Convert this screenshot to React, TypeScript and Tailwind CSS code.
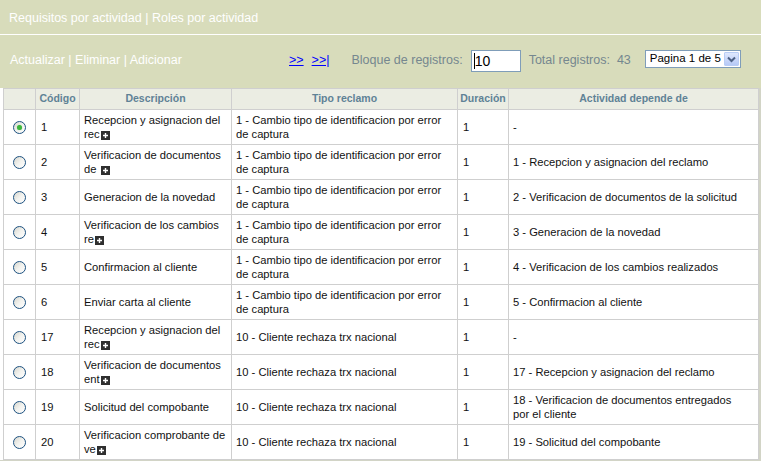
import React from 'react';

type Row = {
  code: number;
  desc: string[];
  more?: boolean;
  tipo: string[];
  dur: number;
  act: string[];
  checked?: boolean;
};

const TIPO_1 = ['1 - Cambio tipo de identificacion por error', 'de captura'];
const TIPO_10 = ['10 - Cliente rechaza trx nacional'];

const rows: Row[] = [
  { code: 1, desc: ['Recepcion y asignacion del', 'rec'], more: true, tipo: TIPO_1, dur: 1, act: ['-'], checked: true },
  { code: 2, desc: ['Verificacion de documentos', 'de '], more: true, tipo: TIPO_1, dur: 1, act: ['1 - Recepcion y asignacion del reclamo'] },
  { code: 3, desc: ['Generacion de la novedad'], tipo: TIPO_1, dur: 1, act: ['2 - Verificacion de documentos de la solicitud'] },
  { code: 4, desc: ['Verificacion de los cambios', 're'], more: true, tipo: TIPO_1, dur: 1, act: ['3 - Generacion de la novedad'] },
  { code: 5, desc: ['Confirmacion al cliente'], tipo: TIPO_1, dur: 1, act: ['4 - Verificacion de los cambios realizados'] },
  { code: 6, desc: ['Enviar carta al cliente'], tipo: TIPO_1, dur: 1, act: ['5 - Confirmacion al cliente'] },
  { code: 17, desc: ['Recepcion y asignacion del', 'rec'], more: true, tipo: TIPO_10, dur: 1, act: ['-'] },
  { code: 18, desc: ['Verificacion de documentos', 'ent'], more: true, tipo: TIPO_10, dur: 1, act: ['17 - Recepcion y asignacion del reclamo'] },
  { code: 19, desc: ['Solicitud del compobante'], tipo: TIPO_10, dur: 1, act: ['18 - Verificacion de documentos entregados', 'por el cliente'] },
  { code: 20, desc: ['Verificacion comprobante de', 've'], more: true, tipo: TIPO_10, dur: 1, act: ['19 - Solicitud del compobante'] },
];

// cuadrito negro con "+" que indica texto truncado
function PlusBox() {
  return (
    <span className="ml-px inline-flex h-[9px] w-[9px] items-center justify-center bg-[#2f2f2f] align-[-1px]">
      <svg width="7" height="7" viewBox="0 0 7 7">
        <path d="M3.5 1v5M1 3.5h5" stroke="#fff" strokeWidth="1.4" />
      </svg>
    </span>
  );
}

function Radio({ checked }: { checked?: boolean }) {
  return (
    <span className="mx-auto flex h-[13px] w-[13px] items-center justify-center rounded-full border border-[#1d5281] bg-gradient-to-br from-[#d6d6ce] via-[#f2f2ee] to-white">
      {checked && <span className="h-[5px] w-[5px] rounded-full bg-[#3cb43c] shadow-[0_0_1px_#7ad97a]" />}
    </span>
  );
}

function Lines({ lines, more }: { lines: string[]; more?: boolean }) {
  return (
    <>
      {lines.map((l, i) => (
        <div key={i} className="whitespace-nowrap">
          {l}
          {more && i === lines.length - 1 && <PlusBox />}
        </div>
      ))}
    </>
  );
}

export default function App() {
  const th = 'border border-[#cfcfcf] text-center text-[10.5px] font-bold text-[#5f8296] h-[21px] p-0';
  const td = 'border border-[#cfcfcf] px-[4px] py-0 align-middle h-[35px] leading-[14px] text-[#111]';

  return (
    <div className="w-[761px] h-[461px] overflow-hidden bg-[#d2d4c6] font-['Liberation_Sans',Arial,sans-serif] text-[11.2px] text-black">
      {/* barra de titulo */}
      <div className="flex h-[34px] items-center bg-[#d8dcbb] pl-[9px] pt-[2px] text-[12.5px] text-white">
        Requisitos por actividad | Roles por actividad
      </div>
      <div className="h-px bg-white" />

      {/* barra de acciones y paginacion */}
      <div className="flex h-[53px] items-center bg-[#d8dcbb] pl-[10px] pb-[2px] text-[12.5px]">
        <div className="w-[279px] text-white">Actualizar | Eliminar | Adicionar</div>
        <a href="#" className="text-[#0000ff] underline">&gt;&gt;</a>
        <a href="#" className="ml-[8px] text-[#0000ff] underline">&gt;&gt;|</a>
        <span className="ml-[22px] text-[#75878f]">Bloque de registros:</span>
        <span className="ml-[8px] mt-[1px] flex h-[22px] w-[50px] items-center border border-[#7f9db9] bg-white pl-[2px] text-[14px] text-black">
          <span className="h-[16px] w-px bg-black" />
          10
        </span>
        <span className="ml-[8px] text-[#75878f]">Total registros:&nbsp; 43</span>
        <span className="ml-[14px] -mt-[3px] flex h-[18px] w-[96px] items-center border border-[#7f9db9] bg-white pl-[4px] text-[11.5px] text-black">
          <span className="flex-1">Pagina 1 de 5</span>
          <span className="mr-px flex h-[14px] w-[15px] items-center justify-center rounded-[1px] border border-[#b9cdf5] bg-gradient-to-b from-[#dfe8fd] to-[#b6c9f6]">
            <svg width="9" height="7" viewBox="0 0 9 7">
              <path d="M1 1.5l3.5 3.5L8 1.5" fill="none" stroke="#4d6185" strokeWidth="2" />
            </svg>
          </span>
        </span>
      </div>

      {/* tabla */}
      <div className="bg-white pl-[3px] w-[758px]">
        <table className="w-[755px] table-fixed border-collapse bg-white">
          <colgroup>
            <col className="w-[32px]" />
            <col className="w-[44px]" />
            <col className="w-[152px]" />
            <col className="w-[226px]" />
            <col className="w-[51px]" />
            <col className="w-[250px]" />
          </colgroup>
          <thead>
            <tr className="bg-[#ebede3]">
              <th className={th}></th>
              <th className={th}>Código</th>
              <th className={th}>Descripción</th>
              <th className={th}>Tipo reclamo</th>
              <th className={th}>Duración</th>
              <th className={th}>Actividad depende de</th>
            </tr>
          </thead>
          <tbody>
            {rows.map((r) => (
              <tr key={r.code}>
                <td className={td + ' px-0'}>
                  <Radio checked={r.checked} />
                </td>
                <td className={td + ' pl-[5px]'}>{r.code}</td>
                <td className={td}>
                  <Lines lines={r.desc} more={r.more} />
                </td>
                <td className={td}>
                  <Lines lines={r.tipo} />
                </td>
                <td className={td + ' pl-[5px]'}>{r.dur}</td>
                <td className={td}>
                  <Lines lines={r.act} />
                </td>
              </tr>
            ))}
          </tbody>
        </table>
      </div>
    </div>
  );
}
